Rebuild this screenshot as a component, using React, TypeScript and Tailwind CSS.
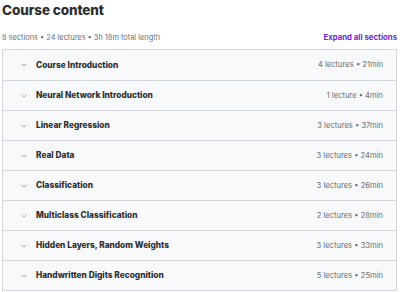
import { ChevronDown } from "lucide-react";

const sections = [
  { title: "Course Introduction", meta: "4 lectures • 21min" },
  { title: "Neural Network Introduction", meta: "1 lecture • 4min" },
  { title: "Linear Regression", meta: "3 lectures • 37min" },
  { title: "Real Data", meta: "3 lectures • 24min" },
  { title: "Classification", meta: "3 lectures • 26min" },
  { title: "Multiclass Classification", meta: "2 lectures • 28min" },
  { title: "Hidden Layers, Random Weights", meta: "3 lectures • 33min" },
  { title: "Handwritten Digits Recognition", meta: "5 lectures • 25min" },
];

export default function App() {
  return (
    <div className="w-[400px] h-[292px] bg-white px-[2px] pt-[1px] font-['Inter',sans-serif] text-[#2d2f31] overflow-hidden">
      <h2 className="text-[13.5px] font-extrabold leading-[19px] tracking-[-0.1px]">Course content</h2>

      <div className="mt-[12px] flex items-center justify-between h-[12px]">
        <p className="text-[7.4px] text-[#6a6f73]">8 sections • 24 lectures • 3h 18m total length</p>
        <button className="text-[7.8px] font-bold text-[#6d28d2] pr-[1px]">Expand all sections</button>
      </div>

      <div className="mt-[5px] w-[395px] border border-[#d1d7dc]">
        {sections.map((s, i) => (
          <div
            key={s.title}
            className={`flex items-center justify-between h-[30px] bg-[#f7f9fa] pl-[17px] pr-[13px] ${
              i > 0 ? "border-t border-[#d1d7dc]" : ""
            }`}
          >
            <div className="flex items-center gap-[8px]">
              <ChevronDown className="w-[8px] h-[8px] text-[#8a8f93]" strokeWidth={2} />
              <span className="text-[8.3px] font-extrabold">{s.title}</span>
            </div>
            <span className="text-[7.6px] text-[#6a6f73]">{s.meta}</span>
          </div>
        ))}
      </div>
    </div>
  );
}
